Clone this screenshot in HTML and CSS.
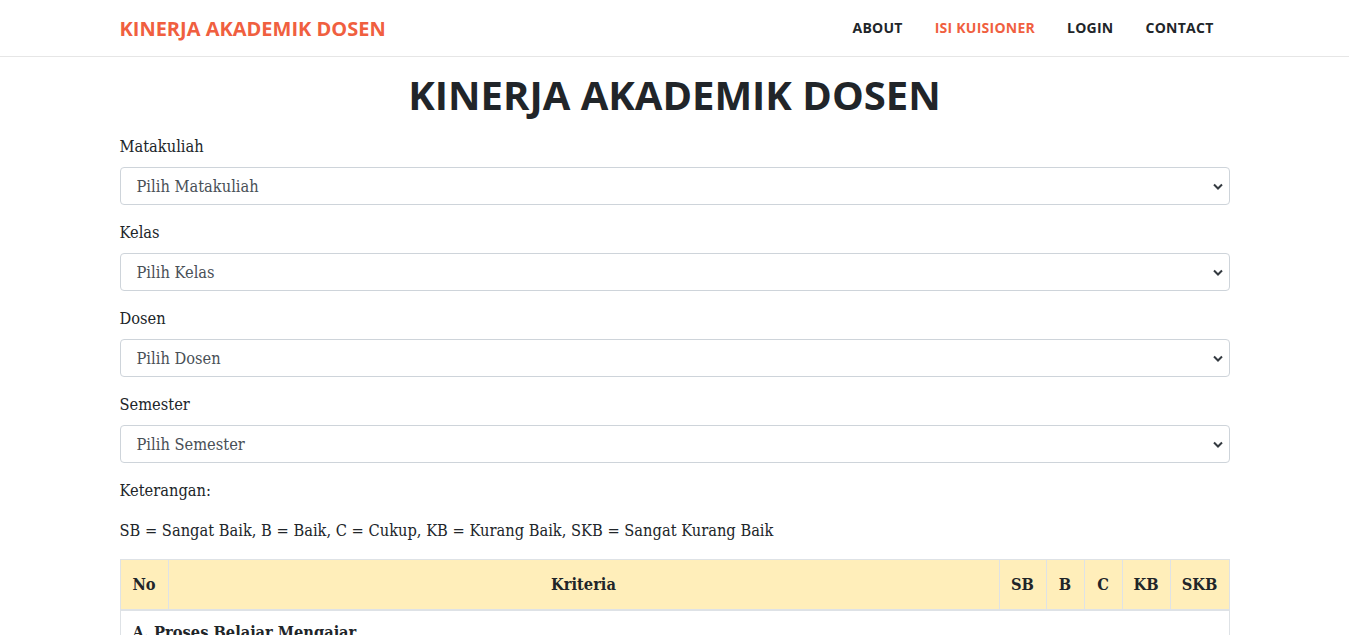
FILE: index.html
```html
<!DOCTYPE html>
<html lang="id">
<head>
<meta charset="utf-8">
<title>Kinerja Akademik Dosen</title>
<link rel="stylesheet" href="styles.css">
</head>
<body>
<nav class="navbar">
  <div class="container nav-inner">
    <a class="brand" href="#">KINERJA AKADEMIK DOSEN</a>
    <ul class="nav-links">
      <li><a href="#">ABOUT</a></li>
      <li><a class="active" href="#">ISI KUISIONER</a></li>
      <li><a href="#">LOGIN</a></li>
      <li><a href="#">CONTACT</a></li>
    </ul>
  </div>
</nav>
<main class="container">
  <h1 class="title">KINERJA AKADEMIK DOSEN</h1>
  <div class="form-group">
    <label>Matakuliah</label>
    <div class="select"><span>Pilih Matakuliah</span><svg width="10" height="7" viewBox="0 0 10 7"><path d="M1 1.5 L5 5.5 L9 1.5" fill="none" stroke="#343a40" stroke-width="2"/></svg></div>
  </div>
  <div class="form-group">
    <label>Kelas</label>
    <div class="select"><span>Pilih Kelas</span><svg width="10" height="7" viewBox="0 0 10 7"><path d="M1 1.5 L5 5.5 L9 1.5" fill="none" stroke="#343a40" stroke-width="2"/></svg></div>
  </div>
  <div class="form-group">
    <label>Dosen</label>
    <div class="select"><span>Pilih Dosen</span><svg width="10" height="7" viewBox="0 0 10 7"><path d="M1 1.5 L5 5.5 L9 1.5" fill="none" stroke="#343a40" stroke-width="2"/></svg></div>
  </div>
  <div class="form-group">
    <label>Semester</label>
    <div class="select"><span>Pilih Semester</span><svg width="10" height="7" viewBox="0 0 10 7"><path d="M1 1.5 L5 5.5 L9 1.5" fill="none" stroke="#343a40" stroke-width="2"/></svg></div>
  </div>
  <p class="note">Keterangan:</p>
  <p class="note">SB = Sangat Baik, B = Baik, C = Cukup, KB = Kurang Baik, SKB = Sangat Kurang Baik</p>
  <table class="table">
    <colgroup>
      <col class="c-no">
      <col>
      <col class="c-sb">
      <col class="c-b">
      <col class="c-c">
      <col class="c-kb">
      <col class="c-skb">
    </colgroup>
    <thead>
      <tr>
        <th>No</th>
        <th>Kriteria</th>
        <th>SB</th>
        <th>B</th>
        <th>C</th>
        <th>KB</th>
        <th>SKB</th>
      </tr>
    </thead>
    <tbody>
      <tr>
        <td colspan="7" class="section">A. Proses Belajar Mengajar</td>
      </tr>
    </tbody>
  </table>
</main>
</body>
</html>
```
FILE: styles.css
```css
* { box-sizing: border-box; }
body {
  margin: 0;
  font-family: "DejaVu Serif Condensed", "DejaVu Serif", serif;
  font-stretch: condensed;
  font-size: 16.3px;
  color: #212529;
  background: #fff;
}
.container {
  max-width: 1140px;
  margin: 0 auto;
  padding: 0 15px;
}
.navbar {
  height: 57px;
  border-bottom: 1px solid #e6e6e6;
}
.nav-inner {
  display: flex;
  align-items: center;
  justify-content: space-between;
  height: 56px;
}
.brand {
  font-family: "Open Sans", sans-serif;
  font-stretch: normal;
  font-weight: 700;
  font-size: 20px;
  color: #f05f40;
  text-decoration: none;
}
.nav-links {
  display: flex;
  list-style: none;
  margin: 0 0 2px;
  padding: 0;
}
.nav-links a {
  display: block;
  padding: 0 16px;
  font-family: "Open Sans", sans-serif;
  font-stretch: normal;
  font-weight: 700;
  font-size: 14px;
  letter-spacing: 0.25px;
  color: #212529;
  text-decoration: none;
}
.nav-links a.active { color: #f05f40; }
.title {
  font-family: "Open Sans", sans-serif;
  font-stretch: normal;
  font-weight: 700;
  font-size: 40px;
  text-align: center;
  margin: 14px 0 16px;
  line-height: 1.2;
}
.form-group { margin-bottom: 16px; }
label {
  display: block;
  margin-bottom: 8px;
  line-height: 24px;
}
.select {
  display: flex;
  align-items: center;
  justify-content: space-between;
  height: 38px;
  border: 1px solid #ced4da;
  border-radius: 4px;
  padding: 0 6px 0 16px;
  color: #495057;
}
.note {
  margin: 0 0 16px;
  line-height: 24px;
}
.note + .note { margin-top: 16px; }
.table {
  width: 100%;
  border-collapse: collapse;
  table-layout: fixed;
}
.c-no { width: 48px; }
.c-sb { width: 47px; }
.c-b { width: 38px; }
.c-c { width: 38px; }
.c-kb { width: 48px; }
.c-skb { width: 59px; }
.table th {
  background: #ffeeba;
  border: 1px solid #dee2e6;
  border-bottom: 2px solid #dee2e6;
  height: 50px;
  padding: 0;
  text-align: center;
  font-weight: 700;
}
.table td {
  border: 1px solid #dee2e6;
  padding: 12px;
  font-weight: 700;
}
```
